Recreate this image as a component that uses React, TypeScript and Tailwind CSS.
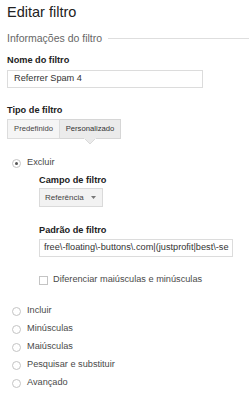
import React from "react";

function Radio({ checked = false }: { checked?: boolean }) {
  return (
    <span className="w-[9px] h-[9px] rounded-full border border-[#c4c4c4] bg-white flex items-center justify-center shrink-0">
      {checked && <span className="w-[3px] h-[3px] rounded-full bg-[#555]" />}
    </span>
  );
}

export default function App() {
  const options = ["Incluir", "Minúsculas", "Maiúsculas", "Pesquisar e substituir", "Avançado"];
  return (
    <div className="w-[249px] h-[400px] bg-white pl-[7px] overflow-hidden font-['Liberation_Sans',Arial,sans-serif] text-[#4a4a4a]">
      <h1 className="pt-[3px] text-[14.5px] leading-[18px] text-[#222] font-normal">Editar filtro</h1>

      <div className="mt-[10px] flex items-center h-[14px]">
        <span className="text-[10.5px] leading-[14px] text-[#666] whitespace-nowrap">Informações do filtro</span>
        <span className="flex-1 h-px bg-[#dedede] ml-[6px]" />
      </div>

      <div className="mt-[9px] text-[9.2px] leading-[12px] font-bold text-[#222]">Nome do filtro</div>
      <div className="mt-[4px] w-[196px] h-[18px] border border-[#dcdcdc] flex items-center pl-[6px] text-[9.2px] text-[#333]">
        Referrer Spam 4
      </div>

      <div className="mt-[16px] text-[9.2px] leading-[12px] font-bold text-[#222]">Tipo de filtro</div>
      <div className="mt-[3px] flex h-[20px]">
        <div className="w-[53px] h-[20px] border border-[#dcdcdc] bg-[#f5f5f5] flex items-center justify-center text-[7.7px] text-[#444]">
          Predefinido
        </div>
        <div className="relative w-[61px] h-[20px] border border-l-0 border-[#d6d6d6] bg-[#ebebeb] flex items-center justify-center text-[7.7px] text-[#333]">
          Personalizado
          <svg className="absolute left-1/2 -translate-x-1/2 top-[18px]" width="12" height="7" viewBox="0 0 12 7">
            <path d="M0 0 L6 6 L12 0 Z" fill="#ebebeb" />
            <path d="M0 0 L6 6 L12 0" fill="none" stroke="#dadada" strokeWidth="1" />
            <rect x="0" y="0" width="12" height="1" fill="#ebebeb" />
          </svg>
        </div>
      </div>

      <div className="mt-[18px] pl-[5px] flex items-center gap-[6px] h-[12px] text-[9.2px]">
        <Radio checked />
        <span>Excluir</span>
      </div>

      <div className="pl-[32px]">
        <div className="mt-[5px] text-[9.2px] leading-[12px] font-bold text-[#222]">Campo de filtro</div>
        <div className="mt-[2px] w-[64px] h-[19px] border border-[#dadada] bg-[#f2f2f2] flex items-center pl-[5px] text-[8px] text-[#444]">
          <span className="flex-1">Referência</span>
          <svg className="mr-[6px]" width="5" height="3" viewBox="0 0 5 3">
            <path d="M0 0 L5 0 L2.5 3 Z" fill="#777" />
          </svg>
        </div>

        <div className="mt-[17px] text-[9.2px] leading-[12px] font-bold text-[#222]">Padrão de filtro</div>
        <div className="mt-[3px] w-[194px] h-[18px] border border-[#dcdcdc] flex items-center pl-[4px] text-[9.2px] text-[#333] overflow-hidden whitespace-nowrap">
          free\-floating\-buttons\.com|(justprofit|best\-se
        </div>

        <div className="mt-[17px] flex items-center gap-[5px] h-[12px] text-[9.2px]">
          <span className="w-[9px] h-[9px] border border-[#c4c4c4] bg-white shrink-0" />
          <span>Diferenciar maiúsculas e minúsculas</span>
        </div>
      </div>

      <div className="mt-[16px] flex flex-col">
        {options.map((o) => (
          <div key={o} className="pl-[5px] h-[18px] flex items-center gap-[6px] text-[9.2px]">
            <Radio />
            <span>{o}</span>
          </div>
        ))}
      </div>
    </div>
  );
}
